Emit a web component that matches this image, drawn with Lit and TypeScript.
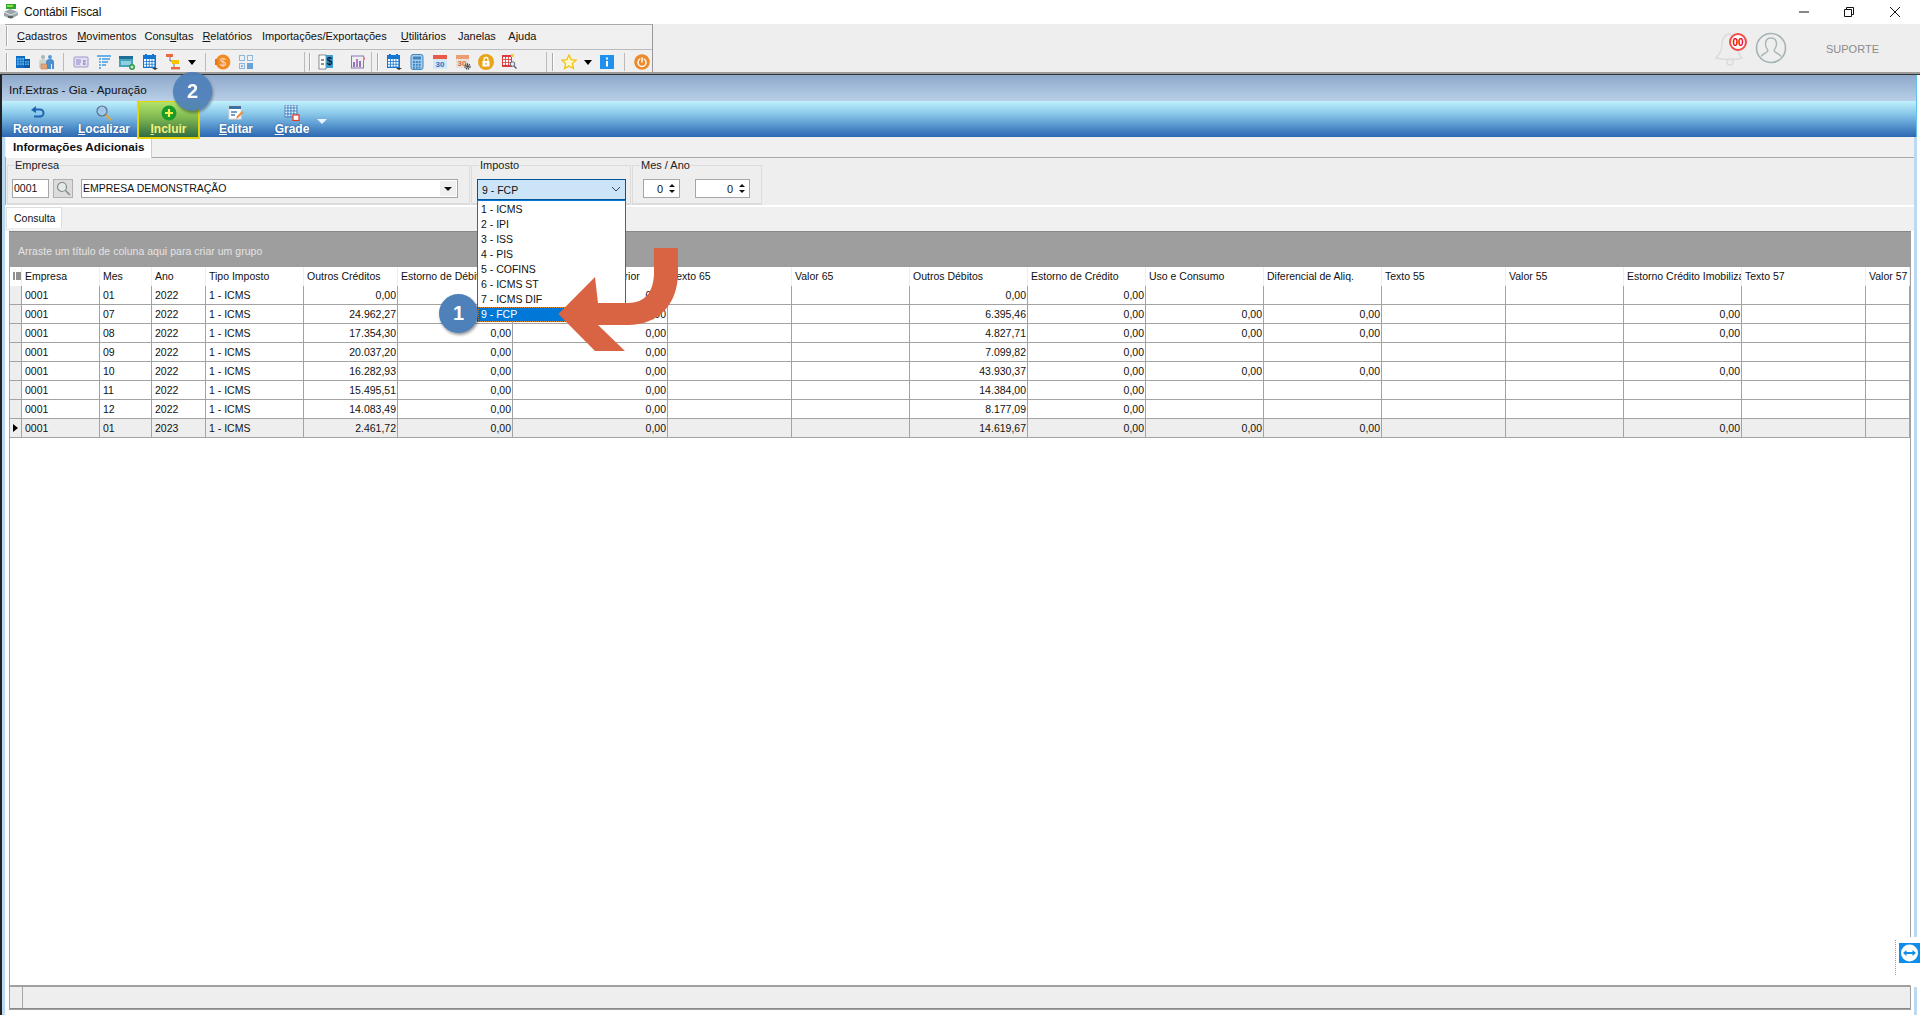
import { LitElement, html, css, svg } from "lit";
import { customElement } from "lit/decorators.js";

const S = (inner: unknown) => html`<svg class="ic" viewBox="0 0 16 16" width="16" height="16">${inner}</svg>`;

const grid = (x: number, y: number, n: number, m: number, s: number, c: string) => {
  const out: unknown[] = [];
  for (let i = 0; i < n; i++) for (let j = 0; j < m; j++)
    out.push(svg`<rect x=${x + i * s} y=${y + j * s} width=${s - 0.8} height=${s - 0.8} fill=${c}/>`);
  return out;
};

const ICONS: Record<string, unknown> = {
  building: S(svg`<rect x="1" y="2" width="9" height="12" fill="#0f6cc4"/><rect x="9" y="5" width="6" height="9" fill="#0a5aa8"/>${grid(2, 4, 3, 3, 2.6, "#5fb0ee")}${grid(10, 7, 2, 2, 2.4, "#5fb0ee")}`),
  people: S(svg`<circle cx="5" cy="3" r="2" fill="#a9b5b5"/><path d="M1 14V8q0-3 4-3t3 3v6z" fill="#cfd6d2"/><circle cx="12" cy="3" r="2" fill="#5a9bd6"/><path d="M8 15V8q0-3 4-3t4 3v7h-2v-5h-1v5z" fill="#4d8fcf"/><rect x="3" y="10" width="6" height="5" fill="#e4a77d" stroke="#c47a48" stroke-width=".6"/>`),
  card: S(svg`<rect x="1" y="3" width="14" height="10" rx="1" fill="#e3e0f2" stroke="#9e97cf"/><path d="M3 6h5M3 8h5M3 10h4M11 6v5M10 7h3M10 10h3" stroke="#8d86c4" stroke-width="1"/>`),
  filter: S(svg`<path d="M1 2h14M3 5h2M6 5h8M3 8h2M6 8h6M3 11h2M6 11h4M3 14h2" stroke="#3f9be6" stroke-width="1.6"/>`),
  win: S(svg`<rect x="0" y="2" width="14" height="11" fill="#4aa3bd"/><rect x="0" y="2" width="14" height="3" fill="#1c6f97"/><rect x="2" y="7" width="10" height="4" fill="#8fd0e0"/><circle cx="13" cy="13" r="3" fill="#2e9b4a"/><path d="M11.5 13h3M13 11.5v3" stroke="#fff"/>`),
  cal: S(svg`<rect x="1" y="1" width="13" height="13" fill="#1576d2"/><rect x="3" y="0" width="2" height="2" fill="#1576d2"/><rect x="10" y="0" width="2" height="2" fill="#1576d2"/>${grid(2, 5, 4, 3, 2.8, "#fff")}<path d="M10 14h6l-3 2z" fill="#333"/>`),
  org: S(svg`<rect x="1" y="0" width="7" height="3" fill="#ea6a3c"/><rect x="7" y="6" width="7" height="4" fill="#f6c400"/><rect x="6" y="13" width="9" height="2.4" fill="#ea6a3c"/><path d="M5 3v4h2M9 10v3" stroke="#555" fill="none" stroke-width=".8"/>`),
  coin: S(svg`<circle cx="8" cy="8" r="7.4" fill="#f28b22"/><rect x="0" y="5" width="2.5" height="6" fill="#e67716"/><text x="8" y="12" text-anchor="middle" font-size="11" font-family="Liberation Sans" fill="#ffe1bd">$</text>`),
  squares: S(svg`<g fill="none" stroke="#8fb6de"><rect x="1.5" y="1.5" width="5" height="5"/><rect x="9.5" y="1.5" width="5" height="5"/><rect x="1.5" y="9.5" width="5" height="5"/></g><circle cx="4" cy="12" r="1.2" fill="#8fb6de"/><rect x="9" y="9" width="6" height="6" fill="#6aa0d8"/>`),
  doc: S(svg`<rect x="1" y="1" width="7" height="14" fill="#fff" stroke="#222" stroke-width=".5"/><path d="M3 6h3M3 10h3" stroke="#222"/><rect x="8" y="1" width="7" height="13" fill="#3f9bd0"/><text x="11.5" y="11" text-anchor="middle" font-size="10" font-weight="bold" font-family="Liberation Sans" fill="#123">$</text>`),
  chart: S(svg`<rect x="1.5" y="2" width="12" height="12" fill="#eee" stroke="#8a76b8"/><rect x="3" y="8" width="2" height="5" fill="#8a76b8"/><rect x="6" y="5" width="2" height="8" fill="#b37bc4"/><rect x="9" y="7" width="2" height="6" fill="#8a76b8"/><rect x="13" y="3" width="2" height="3" fill="#e084a4"/>`),
  calc: S(svg`<rect x="2" y="0.5" width="12" height="15" rx="2" fill="#a8cdea" stroke="#3f86c4"/><rect x="4" y="2.5" width="8" height="3" fill="#3f86c4"/>${grid(4, 7, 3, 3, 2.8, "#3f86c4")}`),
  cal30: S(svg`<rect x="1" y="2" width="14" height="13" fill="#d2e8f8"/><rect x="1" y="1" width="14" height="4" fill="#ea5a4a"/><text x="8" y="13" text-anchor="middle" font-size="8" font-weight="bold" font-family="Liberation Sans" fill="#2f6fbd">30</text>`),
  cal30g: S(svg`<rect x="1" y="2" width="13" height="12" fill="#e8e2da"/><rect x="1" y="1" width="13" height="4" fill="#ee9c72"/><text x="7" y="12" text-anchor="middle" font-size="8" font-weight="bold" font-family="Liberation Sans" fill="#d66a4a">30</text><circle cx="12.5" cy="12.5" r="2.4" fill="none" stroke="#4a4f55" stroke-width="1.6" stroke-dasharray="1.2 .7"/><circle cx="12.5" cy="12.5" r="1.4" fill="#4a4f55"/>`),
  lock: S(svg`<circle cx="8" cy="8" r="8" fill="#e7a417"/><rect x="4.5" y="7" width="7" height="5.5" fill="#fff"/><path d="M6 7V5.5a2 2 0 014 0V7" stroke="#fff" stroke-width="1.3" fill="none"/><rect x="7.4" y="8.8" width="1.2" height="2" fill="#e7a417"/>`),
  redgrid: S(svg`<rect x="1" y="1" width="10" height="12" fill="#e0393a"/>${grid(2, 3, 3, 3, 2.9, "#fff")}<circle cx="11.5" cy="10" r="2.3" fill="#dce8f2" stroke="#667"/><path d="M13 12l2.5 2.5" stroke="#556" stroke-width="1.2"/><rect x="10" y="0" width="3" height="3" fill="#f4d030"/>`),
  star: S(svg`<path d="M8 1l2.1 4.6 5 .6-3.7 3.4 1 4.9L8 12.1 3.6 14.5l1-4.9L.9 6.2l5-.6z" fill="#fff8cc" stroke="#f2c41d" stroke-width="1.4"/>`),
  info: S(svg`<rect x="1" y="1" width="14" height="14" fill="#1e90ee"/><rect x="7" y="3.5" width="2" height="2" fill="#fff"/><rect x="7" y="7" width="2" height="5.5" fill="#fff"/>`),
  power: S(svg`<circle cx="8" cy="8" r="7.8" fill="#ee8a2c"/><circle cx="8" cy="8.5" r="4" fill="none" stroke="#fff" stroke-width="1.5"/><path d="M8 3v5" stroke="#ee8a2c" stroke-width="3.5"/><path d="M8 3.5v5" stroke="#fff" stroke-width="1.5"/>`),
};

const COLS = ["Empresa", "Mes", "Ano", "Tipo Imposto", "Outros Créditos", "Estorno de Débito", "Saldo Credor Mês Anterior", "Texto 65", "Valor 65", "Outros Débitos", "Estorno de Crédito", "Uso e Consumo", "Diferencial de Aliq.", "Texto 55", "Valor 55", "Estorno Crédito Imobilizado", "Texto 57", "Valor 57"];
const RIGHT = new Set([4, 5, 6, 8, 9, 10, 11, 12, 14, 15, 17]);

const mk = (m: string, y: string, oc: string, od: string, u: boolean) => {
  const z = u ? "0,00" : "";
  return ["0001", m, y, "1 - ICMS", oc, "0,00", "0,00", "", "", od, "0,00", z, z, "", "", z, "", ""];
};
const ROWS = [
  mk("01", "2022", "0,00", "0,00", false),
  mk("07", "2022", "24.962,27", "6.395,46", true),
  mk("08", "2022", "17.354,30", "4.827,71", true),
  mk("09", "2022", "20.037,20", "7.099,82", false),
  mk("10", "2022", "16.282,93", "43.930,37", true),
  mk("11", "2022", "15.495,51", "14.384,00", false),
  mk("12", "2022", "14.083,49", "8.177,09", false),
  mk("01", "2023", "2.461,72", "14.619,67", true),
];
const OPTIONS = ["1 - ICMS", "2 - IPI", "3 - ISS", "4 - PIS", "5 - COFINS", "6 - ICMS ST", "7 - ICMS DIF", "9 - FCP"];

@customElement("app-root")
export class AppRoot extends LitElement {
  static styles = css`
    :host { display: block; width: 1920px; height: 1015px; position: relative; overflow: hidden; background: #fff;
      font-family: "Liberation Sans", Arial, sans-serif; font-size: 11px; color: #111; }
    .app { display: flex; flex-direction: column; height: 1015px; }
    u { text-decoration: underline; }

    .titlebar { height: 24px; display: flex; align-items: center; background: #fff; flex: none; }
    .appicon { margin-left: 3px; width: 16px; height: 16px; }
    .apptitle { margin-left: 5px; font-size: 12px; letter-spacing: -.1px; color: #111; }
    .winbtns { margin-left: auto; display: flex; align-items: center; }
    .winbtns svg { display: block; }
    .wb1 { margin-right: 35px; } .wb2 { margin-right: 36px; } .wb3 { margin-right: 20px; }

    .panel { height: 48px; flex: none; display: flex; background: #eeeeee; border-bottom: 2px solid #9c9c9c; box-shadow: 0 1px 0 #333; position: relative; z-index: 1; }
    .bars { width: 647px; margin-left: 5px; display: flex; flex-direction: column; background: #f0f0f0; border-right: 1px solid #999; border-top: 1px solid #aaa; }
    .menu { height: 25px; display: flex; align-items: center; border-bottom: 1px solid #bbb; padding: 0 0 2px 1px; box-sizing: border-box; flex: none; }
    .handle { width: 1px; height: 20px; background: #aaa; box-shadow: 1px 0 0 #fff; flex: none; }
    .menu span { font-size: 11px; white-space: nowrap; }
    .m1 { margin-left: 10px; } .m2 { margin-left: 10px; } .m3 { margin-left: 8px; } .m4 { margin-left: 9px; } .m5 { margin-left: 10px; } .m6 { margin-left: 14px; } .m7 { margin-left: 12px; } .m8 { margin-left: 12.5px; }
    .tools { flex: 1; display: flex; align-items: center; padding-top: 2px; box-sizing: border-box; min-height: 0; }
    .tg { height: 100%; display: flex; align-items: center; flex: none; box-sizing: border-box; border-right: 1px solid #bbb; }
    .tg1 { width: 300px; padding-left: 1px; }
    .tg2 { width: 67px; padding-left: 4px; }
    .tg3 { width: 175px; padding-left: 5px; }
    .tg4 { flex: 1; padding-left: 5px; border-right: none; }
    .tg .handle { height: 18px; }
    .first { margin-left: 4px; }
    .t { width: 23px; height: 20px; display: flex; align-items: center; justify-content: center; flex: none; }
    .ic { display: block; }
    .sep { width: 1px; height: 18px; background: #bbb; margin: 0 5.5px; flex: none; }
    .gap9 { margin-left: 9px; }
    .drop { width: 15px; height: 20px; display: flex; align-items: center; justify-content: center; flex: none; }
    .drop i { border: 4px solid transparent; border-top: 5px solid #000; border-bottom: 0; display: block; }
    .notif { margin-left: auto; position: relative; width: 203px; }
    .bell { position: absolute; left: -4px; top: 7px; }
    .user { position: absolute; left: 38px; top: 8px; }
    .suporte { position: absolute; left: 109px; top: 19px; font-size: 11px; color: #8b8b8b; }

    .win { flex: 1; display: flex; flex-direction: column; min-height: 0; margin-top: 1px; margin-right: 3px; border-left: 2px solid #222; position: relative; }
    .wtitle { height: 26px; flex: none; display: flex; align-items: center; padding: 3px 0 0 7px; font-size: 11.7px; color: #111; background: linear-gradient(#8ea8cb, #b8cfe7); box-sizing: border-box; border-right: 1px solid #5cc4ea; }
    .ribbon { height: 36px; flex: none; display: flex; background: linear-gradient(#c0f1fc 0%, #8ac8ea 35%, #4d8cc8 75%, #2d68b2 100%); padding-left: 3px; position: relative; border-right: 1px solid #5cc4ea; }
    .rb { display: flex; flex-direction: column; align-items: center; flex: none; box-sizing: border-box; height: 36px; padding-top: 4px; font-weight: bold; font-size: 12px; color: #fff; text-shadow: 0 0 2px #24528f; position: relative; }
    .rb svg { display: block; }
    .rb span { margin-top: 1px; line-height: 14px; }
    .w1 { width: 66px; } .w2 { width: 66px; }
    .rb.on { width: 63px; height: 38px; padding-top: 3px; border: 2px solid #e6d400; border-top-width: 1px; background: linear-gradient(#b0e36a, #7fb850 45%, #2f6c45 100%); color: #f6f27a; text-shadow: none; z-index: 2; }
    .w4 { width: 72px; } .w5 { width: 40px; }
    .rdrop { width: 0; height: 0; border: 5px solid transparent; border-top: 5px solid #e8f3fb; border-bottom: 0; margin: 18px 0 0 5px; }

    .body { flex: 1; min-height: 0; display: flex; flex-direction: column; border: 3px solid #fff; border-top: 0; border-left-color: #bcd9f2; border-right-color: #bcd9f2; border-bottom: none; background: #fff; }
    .stripa { height: 21px; flex: none; display: flex; background: #f0f0f0; border-bottom: 1px solid #aaa; box-sizing: border-box; }
    .tabA { margin-left: 1px; width: 146px; height: 21px; background: #fff; border-right: 1px solid #ccc; font-weight: bold; font-size: 11.7px; color: #111; padding-left: 7px; line-height: 19px; box-sizing: border-box; }
    .filters { height: 47px; flex: none; display: flex; background: #eeeeee; padding: 7px 0 0 1px; box-sizing: border-box; gap: 1px; border-left: 1px solid #aaa; }
    .grp { height: 40px; box-sizing: border-box; border: 1px solid #dcdcdc; border-bottom-width: 2px; position: relative; display: flex; align-items: flex-start; padding-top: 13px; }
    .lg { position: absolute; top: -7px; left: 7px; background: #eee; padding: 0 1px; font-size: 11px; line-height: 13px; color: #222; }
    .g1 { width: 463px; padding-left: 4px; margin-left: 0; }
    .g1 .lg { left: 6px; }
    .g2 { width: 160px; padding-left: 5px; }
    .g3 { width: 130px; padding-left: 10px; }
    .inp { height: 19px; box-sizing: border-box; background: #fff; border: 1px solid #a6a6a6; font-size: 10.5px; line-height: 17px; padding-left: 1px; flex: none; display: flex; align-items: center; white-space: nowrap; }
    .code { width: 37px; }
    .find { width: 20px; height: 19px; box-sizing: border-box; margin-left: 4px; background: #dcdcdc; border: 1px solid #b0b0b0; flex: none; display: flex; align-items: center; justify-content: center; }
    .sel { width: 377px; margin-left: 8px; justify-content: space-between; padding: 0 0 0 1px; }
    .arrowbtn { width: 16px; height: 15px; background: #f0f0f0; margin-right: 1px; display: flex; align-items: center; justify-content: center; }
    .arrowbtn i { border: 4px solid transparent; border-top: 4px solid #111; border-bottom: 0; display: block; }
    .cbo { position: relative; width: 149px; height: 21px; box-sizing: border-box; background: #cce4f7; border: 1px solid #005499; display: flex; align-items: center; padding-left: 4px; font-size: 10.5px; margin-top: 0; flex: none; }
    .cbo svg { position: absolute; right: 4px; top: 6px; }
    .list { position: absolute; left: -1px; top: 20px; width: 149px; height: 122px; box-sizing: border-box; background: #fff; border: 1px solid #0078d7; z-index: 3; padding-top: 1px; }
    .opt { height: 15px; line-height: 15px; padding-left: 3px; font-size: 10.5px; }
    .opt.cur { background: #0078d7; color: #fff; outline: 1px dotted #e08a30; outline-offset: -1px; }
    .spin { height: 19px; box-sizing: border-box; background: #fff; border: 1px solid #a6a6a6; display: flex; align-items: center; justify-content: flex-end; flex: none; font-size: 11px; }
    .s1 { width: 37px; } .s2 { width: 55px; margin-left: 15px; }
    .arrows { width: 14px; display: flex; flex-direction: column; align-items: center; gap: 3px; margin-left: 2px; }
    .arrows i { display: block; border: 3px solid transparent; }
    .arrows .up { border-bottom: 3px solid #111; border-top: 0; }
    .arrows .dn { border-top: 3px solid #111; border-bottom: 0; }

    .stripb { height: 24px; flex: none; display: flex; background: #f0f0f0; margin-top: 2px; }
    .tabB { margin-left: 1px; width: 56px; height: 21px; background: #fff; border: 1px solid #ddd; border-bottom: 0; box-sizing: border-box; font-size: 10.5px; padding-left: 7px; line-height: 20px; }
    .grid { flex: 1; min-height: 0; margin: 0 3px 0 4px; display: flex; flex-direction: column; border: 1px solid #a0a0a0; border-top: 0; background: #fff; margin-bottom: 5px; box-sizing: border-box; }
    .gpanel { height: 36px; flex: none; background: #9e9e9e; border-top: 1px solid #888; color: #e4e4e4; font-size: 10.5px; padding: 13px 0 0 9px; box-sizing: border-box; letter-spacing: .03px; margin-left: -1px; margin-right: -1px; }
    .row { display: grid; grid-template-columns: 12px 78px 52px 54px 98px 94px 115px 155px 124px 118px 118px 118px 118px 118px 124px 118px 118px 124px 44px; height: 19px; flex: none; box-sizing: border-box; }
    .row.d { border-bottom: 1px solid #a3a3a3; }
    .row.act { background: #eeeeee; }
    .c { overflow: hidden; white-space: nowrap; padding: 0 1px 0 3px; border-right: 1px solid #a3a3a3; line-height: 18px; font-size: 10.5px; box-sizing: border-box; color: #111; }
    .hd .c { border-right-color: #eeeeee; line-height: 18px; padding-left: 3px; }
    .r { text-align: right; }
    .ind { padding: 0; background: #eeeeee; display: flex; align-items: center; justify-content: center; }
    .hd .ind { background: #fff; }
    .ind i { border: 4px solid transparent; border-left: 5px solid #000; border-right: 0; display: block; }
    .spacer { flex: 1; }
    .gfoot { height: 24px; flex: none; background: #eeeeee; border-top: 2px solid #a0a0a0; box-sizing: border-box; display: flex; border-bottom: 1px solid #8a8a8a; }
    .gfoot b { width: 12px; border-right: 1px solid #a8a8a8; display: block; }

    .ov { position: absolute; pointer-events: none; }
    .badge { position: absolute; width: 39px; height: 39px; border-radius: 50%; background: #4e80b9; color: #fff; font: bold 20px "Liberation Sans", Arial, sans-serif; display: flex; align-items: center; justify-content: center; box-shadow: 1px 2px 3px rgba(0,0,0,.4); z-index: 5; }
    .b1 { left: 439px; top: 294px; }
    .b2 { left: 173px; top: 72px; opacity: .93; }
    .arrowov { left: 550px; top: 240px; z-index: 6; }
    .tv { position: absolute; left: 1895px; top: 937px; width: 25px; height: 50px; background: #fff; border-left: 1px dotted #999; box-sizing: border-box; clip-path: polygon(3px 0, 100% 0, 100% 100%, 18px 100%, 0 38px, 0 3px); z-index: 6; padding: 6px 0 0 3px; }
    .tv svg { display: block; }
  `;

  private tool(k: string) { return html`<span class="t">${ICONS[k]}</span>`; }

  render() {
    return html`<div class="app">
      <div class="titlebar">
        <svg class="appicon" viewBox="0 0 16 16"><rect x="3" y="0" width="10" height="5" fill="#2fa52f"/><rect x="4" y="1" width="6" height="2" fill="#86e04a"/><path d="M1 8l6-3 8 3v3l-7 4-7-3z" fill="#9aa5a8"/><path d="M1 8l7 3 7-3" fill="none" stroke="#dfe5e6"/><rect x="5" y="12" width="5" height="2" fill="#5c6668"/></svg>
        <span class="apptitle">Contábil Fiscal</span>
        <div class="winbtns">
          <svg class="wb1" width="10" height="10" viewBox="0 0 10 10"><path d="M0 5h10" stroke="#111"/></svg>
          <svg class="wb2" width="10" height="10" viewBox="0 0 10 10"><path d="M2.5 2.5V.5h7v7h-2M.5 2.5h7v7h-7z" fill="none" stroke="#111"/></svg>
          <svg class="wb3" width="10" height="10" viewBox="0 0 10 10"><path d="M0 0l10 10M10 0L0 10" stroke="#111"/></svg>
        </div>
      </div>

      <div class="panel">
        <div class="bars">
          <div class="menu">
            <i class="handle"></i>
            <span class="m1"><u>C</u>adastros</span><span class="m2"><u>M</u>ovimentos</span><span class="m3">Cons<u>u</u>ltas</span><span class="m4"><u>R</u>elatórios</span><span class="m5">Importações/Exportações</span><span class="m6"><u>U</u>tilitários</span><span class="m7">Janelas</span><span class="m8">Ajuda</span>
          </div>
          <div class="tools">
            <div class="tg tg1">
              <i class="handle"></i><span class="first"></span>
              ${this.tool("building")}${this.tool("people")}<i class="sep"></i>
              ${this.tool("card")}${this.tool("filter")}${this.tool("win")}${this.tool("cal")}${this.tool("org")}
              <span class="drop"><i></i></span><i class="sep"></i>
              ${this.tool("coin")}${this.tool("squares")}
            </div>
            <div class="tg tg2">
              <i class="handle"></i><span class="first"></span>
              ${this.tool("doc")}<span class="gap9"></span>${this.tool("chart")}
            </div>
            <div class="tg tg3">
              <i class="handle"></i><span class="first"></span>
              ${this.tool("cal")}${this.tool("calc")}${this.tool("cal30")}${this.tool("cal30g")}${this.tool("lock")}${this.tool("redgrid")}
            </div>
            <div class="tg tg4">
              <i class="handle"></i><span class="first"></span>
              ${this.tool("star")}<span class="drop"><i></i></span>${this.tool("info")}<i class="sep"></i>${this.tool("power")}
            </div>
          </div>
        </div>
        <div class="notif">
          <svg class="bell" width="36" height="36" viewBox="0 0 36 36"><path d="M15 3c-4 2-6 5-6 10 0 7-3 11-6 14 8 2 20 2 26 0-3-3-5-6-5-13 0-6-4-11-9-11z" fill="#eee" stroke="#dcdcdc" stroke-width="1.5"/><circle cx="17" cy="31" r="3" fill="none" stroke="#dcdcdc" stroke-width="1.5"/><circle cx="25" cy="11" r="8" fill="#fff" stroke="#f24b48" stroke-width="2"/><text x="25" y="14.5" text-anchor="middle" font-size="10" font-weight="bold" font-family="Liberation Sans" fill="#f00000">00</text></svg>
          <svg class="user" width="32" height="32" viewBox="0 0 32 32"><circle cx="16" cy="16" r="14.5" fill="#eee" stroke="#a3b3b3" stroke-width="1.6"/><path d="M16 6c-4 0-5.5 3-5.5 6 0 3 1.5 5 2.5 6.5 0 2-5 3-7 6M16 6c4 0 5.5 3 5.5 6 0 3-1.5 5-2.5 6.5 0 2 5 3 7 6" fill="none" stroke="#a3b3b3" stroke-width="1.3"/></svg>
          <span class="suporte">SUPORTE</span>
        </div>
      </div>

      <div class="win">
        <div class="wtitle">Inf.Extras - Gia - Apuração</div>
        <div class="ribbon">
          <div class="rb w1">
            <svg width="16" height="16" viewBox="0 0 16 16"><path d="M1 5l5-4v2.500h4a4.500 4.500 0 010 9H4v-2h6a2.500 2.500 0 000-5H6V8z" fill="#1f63b5"/></svg>
            <span>Retornar</span>
          </div>
          <div class="rb w2">
            <svg width="16" height="16" viewBox="0 0 16 16"><circle cx="6" cy="6" r="5" fill="#9fc8ea" stroke="#5b7088" stroke-width="1.2"/><path d="M10 10l5 5" stroke="#e0a838" stroke-width="2"/></svg>
            <span><u>L</u>ocalizar</span>
          </div>
          <div class="rb on">
            <svg width="16" height="16" viewBox="0 0 16 16"><circle cx="8" cy="8" r="7.500" fill="#1a9a2a"/><path d="M4 8h8M8 4v8" stroke="#f4f14a" stroke-width="2.200"/></svg>
            <span><u>I</u>ncluir</span>
          </div>
          <div class="rb w4">
            <svg width="16" height="16" viewBox="0 0 16 16"><rect x="1" y="1" width="12" height="13" fill="#fff" stroke="#d8d8d8"/><rect x="1" y="1" width="12" height="3" fill="#3d6f9f"/><path d="M3 7h6M3 10h4" stroke="#3d82c4" stroke-width="1.400"/><path d="M8 14l1-3 5-5 1.500 1.500-5 5z" fill="#ee8a3c"/></svg>
            <span><u>E</u>ditar</span>
          </div>
          <div class="rb w5">
            <svg width="16" height="16" viewBox="0 0 16 16">${grid(1, 0, 4, 4, 3, "#f0f6fb")}<path d="M1 0v12M4 0v12M7 0v12M10 0v12M13 0v12M1 0h12M1 3h12M1 6h12M1 9h12M1 12h12" stroke="#3d78bc" stroke-width=".8" fill="none"/><rect x="9" y="10" width="6" height="5.500" fill="#fff" stroke="#e8391f" stroke-width="1.200"/></svg>
            <span><u>G</u>rade</span>
          </div>
          <i class="rdrop"></i>
        </div>

        <div class="body">
          <div class="stripa"><div class="tabA">Informações Adicionais</div></div>
          <div class="filters">
            <div class="grp g1">
              <span class="lg">Empresa</span>
              <div class="inp code">0001</div>
              <div class="find"><svg width="15" height="15" viewBox="0 0 15 15"><circle cx="6" cy="6" r="4.500" fill="#e6eaea" stroke="#7a8a8a" stroke-width="1.200"/><path d="M9.500 9.500l4.500 4.500" stroke="#7a8a8a" stroke-width="1.500"/></svg></div>
              <div class="inp sel"><span>EMPRESA DEMONSTRAÇÃO</span><span class="arrowbtn"><i></i></span></div>
            </div>
            <div class="grp g2">
              <span class="lg">Imposto</span>
              <div class="cbo">
                9 - FCP
                <svg width="10" height="7" viewBox="0 0 10 7"><path d="M1 1l4 4 4-4" fill="none" stroke="#445" stroke-width="1"/></svg>
                <div class="list">
                  ${OPTIONS.map((o, i) => html`<div class="opt ${i === 7 ? "cur" : ""}">${o}</div>`)}
                </div>
              </div>
            </div>
            <div class="grp g3">
              <span class="lg">Mes / Ano</span>
              <div class="spin s1">0<span class="arrows"><i class="up"></i><i class="dn"></i></span></div>
              <div class="spin s2">0<span class="arrows"><i class="up"></i><i class="dn"></i></span></div>
            </div>
          </div>
          <div class="stripb"><div class="tabB">Consulta</div></div>
          <div class="grid">
            <div class="gpanel">Arraste um título de coluna aqui para criar um grupo</div>
            <div class="row hd">
              <div class="c ind"><svg width="8" height="9" viewBox="0 0 8 9"><path d="M0 1h2M3 1h5M0 3h2M3 3h5M0 5h2M3 5h5M0 7h2M3 7h5" stroke="#222"/></svg></div>
              ${COLS.map((c) => html`<div class="c">${c}</div>`)}
            </div>
            ${ROWS.map((r, i) => html`<div class="row d ${i === 7 ? "act" : ""}">
              <div class="c ind">${i === 7 ? html`<i></i>` : ""}</div>
              ${r.map((v, j) => html`<div class="c ${RIGHT.has(j) ? "r" : ""}">${v}</div>`)}
            </div>`)}
            <div class="spacer"></div>
            <div class="gfoot"><b></b></div>
          </div>
        </div>
      </div>
    </div>

    <div class="badge b2">2</div>
    <div class="badge b1">1</div>
    <svg class="ov arrowov" width="140" height="120" viewBox="550 240 140 120">
      <path d="M558.300 314 L595 277 L598 303 L628 303 C645 303 654 292 654 272 L654 248 L678 248 L678 272 C678 305 658 325 628 325 L598 325 L625 351 L595 351 Z" fill="#d96444"/>
    </svg>
    <div class="tv">
      <svg width="21" height="20" viewBox="0 0 21 20"><rect width="21" height="20" fill="#0e8ee9"/><circle cx="10.500" cy="10" r="8.500" fill="#fff"/><path d="M4 10l3.500-3v2h6V7l3.500 3-3.500 3v-2h-6v2z" fill="#0e8ee9"/></svg>
    </div>`;
  }
}
